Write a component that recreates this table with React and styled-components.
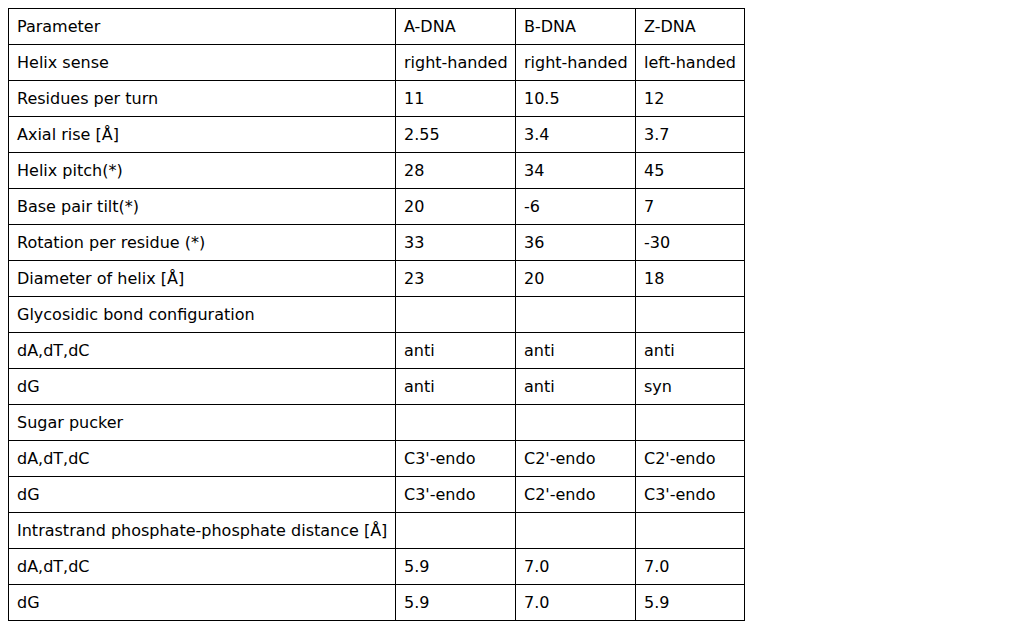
import React from "react";
import styled, { createGlobalStyle } from "styled-components";

const GlobalStyle = createGlobalStyle`
  body {
    margin: 8px;
    background: #fff;
    font-family: "DejaVu Sans", sans-serif;
    font-size: 16px;
    color: #000;
  }
`;

const Table = styled.table`
  border-collapse: collapse;
  table-layout: fixed;
  width: 736px;
  font-family: "DejaVu Sans", sans-serif;
  font-size: 16px;
`;

const Col = styled.col`
  width: ${({ $w }) => $w}px;
`;

const Cell = styled.td`
  border: 1px solid #000;
  padding: 8px;
  text-align: left;
  white-space: nowrap;
  overflow: hidden;
  line-height: normal;
`;

const widths = [387, 120, 120, 109];

const rows = [
  ["Parameter", "A-DNA", "B-DNA", "Z-DNA"],
  ["Helix sense", "right-handed", "right-handed", "left-handed"],
  ["Residues per turn", "11", "10.5", "12"],
  ["Axial rise [Å]", "2.55", "3.4", "3.7"],
  ["Helix pitch(*)", "28", "34", "45"],
  ["Base pair tilt(*)", "20", "-6", "7"],
  ["Rotation per residue (*)", "33", "36", "-30"],
  ["Diameter of helix [Å]", "23", "20", "18"],
  ["Glycosidic bond configuration", "", "", ""],
  ["dA,dT,dC", "anti", "anti", "anti"],
  ["dG", "anti", "anti", "syn"],
  ["Sugar pucker", "", "", ""],
  ["dA,dT,dC", "C3'-endo", "C2'-endo", "C2'-endo"],
  ["dG", "C3'-endo", "C2'-endo", "C3'-endo"],
  ["Intrastrand phosphate-phosphate distance [Å]", "", "", ""],
  ["dA,dT,dC", "5.9", "7.0", "7.0"],
  ["dG", "5.9", "7.0", "5.9"],
];

export default function App() {
  return (
    <>
      <GlobalStyle />
      <Table>
        <colgroup>
          {widths.map((w, i) => (
            <Col key={i} $w={w} />
          ))}
        </colgroup>
        <tbody>
          {rows.map((row, i) => (
            <tr key={i}>
              {row.map((cell, j) => (
                <Cell key={j}>{cell}</Cell>
              ))}
            </tr>
          ))}
        </tbody>
      </Table>
    </>
  );
}
